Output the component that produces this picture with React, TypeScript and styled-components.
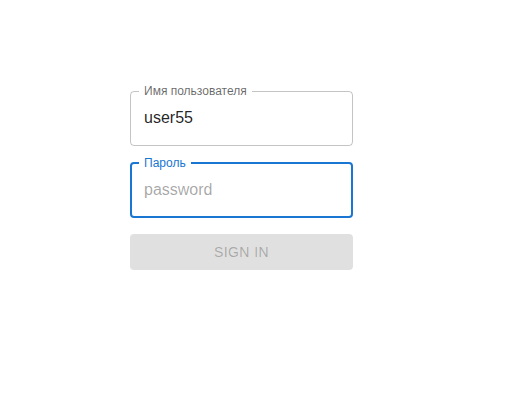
import React from "react";
import styled, { createGlobalStyle } from "styled-components";

const Global = createGlobalStyle`
  html, body { margin: 0; padding: 0; background: #fff; }
  body { font-family: "Liberation Sans", Arial, sans-serif; }
  * { box-sizing: border-box; }
`;

const Page = styled.div`
  width: 509px;
  height: 407px;
  padding: 84px 0 0 130px;
`;

const Form = styled.form`
  width: 223px;
  display: flex;
  flex-direction: column;
`;

const Field = styled.fieldset<{ $focused?: boolean; $gap: number }>`
  margin: ${(p) => p.$gap}px 0 0 0;
  padding: 0 ${(p) => (p.$focused ? 12 : 13)}px ${(p) => (p.$focused ? 6 : 7)}px;
  border: ${(p) => (p.$focused ? "2px solid #1976d2" : "1px solid rgba(0,0,0,0.23)")};
  border-radius: 4px;
  min-width: 0;
`;

const Legend = styled.legend<{ $focused?: boolean }>`
  font-size: 12px;
  line-height: 14px;
  padding: 0 5px;
  margin-left: -5px;
  color: ${(p) => (p.$focused ? "#1976d2" : "rgba(0,0,0,0.6)")};
`;

const Input = styled.input`
  display: block;
  width: 100%;
  height: 40px;
  border: none;
  outline: none;
  padding: 0;
  margin: 0;
  font-family: "Liberation Sans", Arial, sans-serif;
  font-size: 16px;
  color: rgba(0,0,0,0.87);
  background: transparent;
  &::placeholder { color: rgba(0,0,0,0.36); opacity: 1; }
`;

const Button = styled.button`
  margin-top: 16px;
  height: 36px;
  width: 100%;
  border: none;
  border-radius: 4px;
  background: rgba(0,0,0,0.12);
  color: rgba(0,0,0,0.26);
  font-family: "Liberation Sans", Arial, sans-serif;
  font-size: 14px;
  font-weight: 500;
  letter-spacing: 0.4px;
  text-transform: uppercase;
  cursor: default;
`;

export default function App() {
  return (
    <Page>
      <Global />
      <Form onSubmit={(e) => e.preventDefault()}>
        <Field $gap={0}>
          <Legend>Имя пользователя</Legend>
          <Input defaultValue="user55" />
        </Field>
        <Field $focused $gap={10}>
          <Legend $focused>Пароль</Legend>
          <Input type="password" placeholder="password" />
        </Field>
        <Button type="submit" disabled>Sign In</Button>
      </Form>
    </Page>
  );
}
